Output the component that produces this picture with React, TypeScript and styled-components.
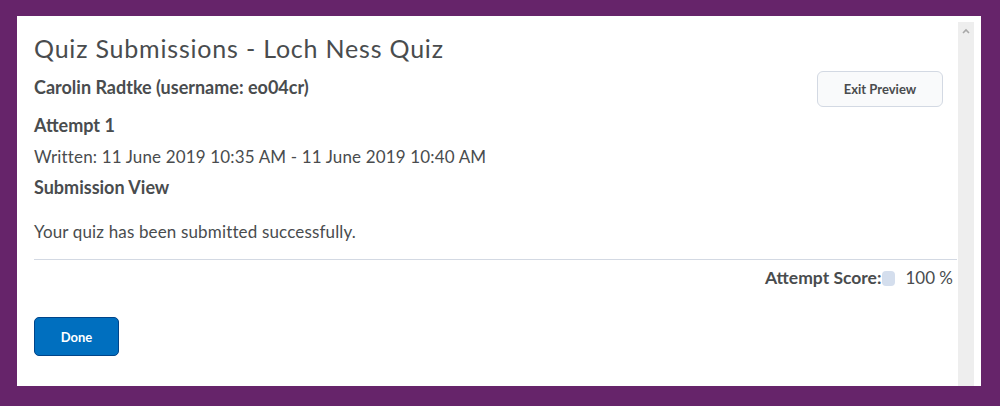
import React from 'react';
import styled, { createGlobalStyle } from 'styled-components';

const GlobalStyle = createGlobalStyle`
  html, body {
    margin: 0;
    padding: 0;
    background: #66246a;
  }
  body {
    font-family: Lato, "Open Sans", sans-serif;
    color: #494c4e;
  }
`;

const Frame = styled.div`
  padding: 16px 19px 20px 17px;
`;

const Panel = styled.div`
  display: flex;
  height: 370px;
  background: #ffffff;
`;

const Content = styled.div`
  flex: 1;
  padding: 16px 1px 0 17px;
`;

const Title = styled.h1`
  margin: 0;
  font-size: 25px;
  line-height: 32px;
  letter-spacing: 0.8px;
  font-weight: 400;
`;

const NameRow = styled.div`
  display: flex;
  justify-content: space-between;
  align-items: flex-start;
  margin-top: 7px;
  padding-right: 14px;
`;

const Line = styled.div<{ $bold?: boolean; $gap?: number }>`
  font-size: ${p => (p.$bold ? 18 : 17)}px;
  letter-spacing: ${p => (p.$bold ? 0 : 0.15)}px;
  line-height: 31px;
  font-weight: ${p => (p.$bold ? 700 : 400)};
  margin-top: ${p => p.$gap ?? 0}px;
`;

const Name = styled(Line)`
  line-height: 30px;
  padding-top: 1px;
`;

const Button = styled.button<{ $primary?: boolean }>`
  font-family: Lato, "Open Sans", sans-serif;
  font-size: 13px;
  font-weight: 700;
  border-radius: 6px;
  cursor: pointer;
  border: 1px solid ${p => (p.$primary ? '#004489' : '#d3d9e3')};
  background: ${p => (p.$primary ? '#006fbf' : '#f9fafb')};
  color: ${p => (p.$primary ? '#ffffff' : '#494c4e')};
`;

const ExitButton = styled(Button)`
  width: 126px;
  height: 36px;
`;

const DoneButton = styled(Button)`
  width: 85px;
  height: 39px;
  margin-top: 24px;
  border-radius: 5px;
`;

const Divider = styled.hr`
  margin: 12px 0 0;
  border: 0;
  border-top: 1px solid #d3d9e3;
`;

const ScoreRow = styled.div`
  display: flex;
  justify-content: flex-end;
  align-items: center;
  margin-top: 2px;
  padding-right: 4px;
  font-size: 17px;
  line-height: 31px;
`;

const ScoreLabel = styled.span`
  font-size: 17.5px;
  font-weight: 700;
`;

const ScoreChip = styled.span`
  display: inline-block;
  width: 13px;
  height: 15px;
  margin: 1px 10px 0 1px;
  border-radius: 4px;
  background: #d4deed;
`;

const Scrollbar = styled.div`
  width: 16px;
  margin: 6px 7px 0 0;
  background: #eeeeee;
  display: flex;
  justify-content: center;
  padding-top: 5px;
  box-sizing: border-box;
`;

export default function App() {
  return (
    <>
      <GlobalStyle />
      <Frame>
        <Panel>
          <Content>
            <Title>Quiz Submissions - Loch Ness Quiz</Title>
            <NameRow>
              <Name $bold>Carolin Radtke (username: eo04cr)</Name>
              <ExitButton>Exit Preview</ExitButton>
            </NameRow>
            <Line $bold $gap={3}>Attempt 1</Line>
            <Line>Written: 11 June 2019 10:35 AM - 11 June 2019 10:40 AM</Line>
            <Line $bold>Submission View</Line>
            <Line $gap={13}>Your quiz has been submitted successfully.</Line>
            <Divider />
            <ScoreRow>
              <ScoreLabel>Attempt Score:</ScoreLabel>
              <ScoreChip />
              <span>100 %</span>
            </ScoreRow>
            <DoneButton $primary>Done</DoneButton>
          </Content>
          <Scrollbar>
            <svg width="10" height="8" viewBox="0 0 10 8">
              <path d="M2 6 L5 3 L8 6" fill="none" stroke="#a8a8a8" strokeWidth="1.6" />
            </svg>
          </Scrollbar>
        </Panel>
      </Frame>
    </>
  );
}
